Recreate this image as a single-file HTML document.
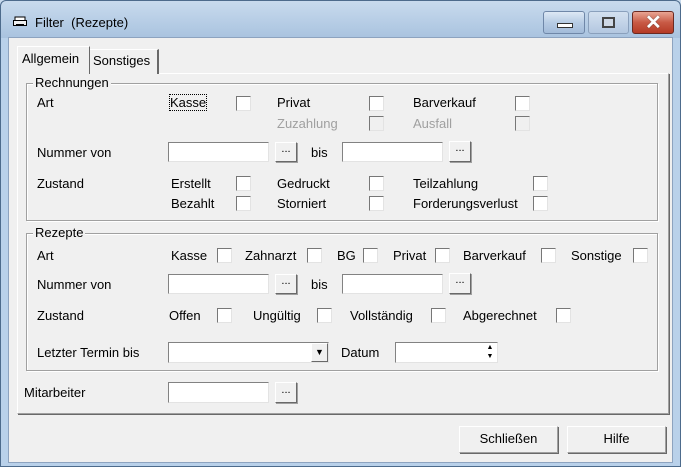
<!DOCTYPE html>
<html><head><meta charset="utf-8"><style>
*{margin:0;padding:0;box-sizing:border-box}
body{width:681px;height:467px;overflow:hidden;font-family:"Liberation Sans",sans-serif;font-size:13px;color:#000;position:relative;background:#b9d1ea}
.a{position:absolute}
.t{position:absolute;line-height:15px;white-space:nowrap}
.cb{position:absolute;width:15px;height:15px;background:#fff;border-top:1px solid #777;border-left:1px solid #777;border-right:1px solid #e3e3e3;border-bottom:1px solid #e3e3e3}
.cb.d{background:#f0f0f0}
.in{position:absolute;background:#fff;border-top:1px solid #828282;border-left:1px solid #828282;border-right:1px solid #e3e3e3;border-bottom:1px solid #e3e3e3}
.bt{position:absolute;background:#f0f0f0;border-top:1px solid #fff;border-left:1px solid #fff;border-right:1px solid #696969;border-bottom:1px solid #696969;box-shadow:1px 1px 0 #a0a0a0;text-align:center;font-size:11px;line-height:12px}
.grp{position:absolute;border:1px solid #a0a0a0;box-shadow:inset 1px 1px 0 #fff,1px 1px 0 #fff}
.gl{position:absolute;background:#f0f0f0;padding:0 2px;line-height:15px}
.g{color:#a0a0a0}
</style></head><body>
<div class="a" style="left:0;top:0;width:681px;height:38px;background:linear-gradient(#c9dbee,#a9c3df)"></div>
<div class="a" style="left:0;top:0;width:681px;height:467px;border:1px solid #4d6b8c;border-radius:6px 6px 0 0"></div>
<svg class="a" style="left:13px;top:16px" width="15" height="12"><rect x="2" y="1" width="10" height="4" fill="#fff" stroke="#000"/><rect x="0.5" y="4.5" width="13" height="5" fill="#eee" stroke="#000"/><rect x="3" y="8" width="8" height="2" fill="#000"/></svg>
<div class="t" style="left:35px;top:15px;font-size:13px">Filter&nbsp; (Rezepte)</div>
<div class="a" style="left:543px;top:11px;width:42px;height:23px;border:1px solid #6f87a8;border-radius:3px;background:linear-gradient(#dde8f5,#b7cce4 50%,#a2bbd9)"><div class="a" style="left:13px;top:11px;width:16px;height:5px;background:#fff;border:1px solid #333"></div></div>
<div class="a" style="left:588px;top:11px;width:41px;height:23px;border:1px solid #8aa0bc;border-radius:3px;background:linear-gradient(#d3e0ef,#b3c7e0)"><div class="a" style="left:13px;top:5px;width:13px;height:11px;border:2px solid #444;background:#cfd8e4"></div></div>
<div class="a" style="left:632px;top:11px;width:42px;height:23px;border:1px solid #6b2a22;border-radius:3px;background:linear-gradient(#e9a593,#c85a45 50%,#b53a25)"><div class="a" style="left:12px;top:0px;color:#fff;font-size:20px;font-weight:bold;line-height:22px;text-shadow:0 0 1px #333">✕</div></div>
<div class="a" style="left:8px;top:37px;width:665px;height:426px;background:#f0f0f0;border:1px solid #8da3bf"></div>
<!-- tabs -->
<div class="a" style="left:17px;top:73px;width:652px;height:341px;border:1px solid #fff;border-right-color:#a0a0a0;border-bottom-color:#a0a0a0;box-shadow:1px 1px 0 #696969"></div>
<div class="a" style="left:89px;top:49px;width:70px;height:25px;border:1px solid #fff;border-bottom:none;border-right:2px solid #696969;background:#f0f0f0"></div>
<div class="t" style="left:93px;top:53px">Sonstiges</div>
<div class="a" style="left:17px;top:46px;width:73px;height:28px;border:1px solid #fff;border-bottom:none;border-right:1px solid #696969;background:#f0f0f0"></div>
<div class="t" style="left:22px;top:51px">Allgemein</div>
<!-- Rechnungen -->
<div class="grp" style="left:26px;top:83px;width:632px;height:138px"></div>
<div class="gl" style="left:33px;top:75px">Rechnungen</div>
<div class="t" style="left:37px;top:95px">Art</div>
<div class="t" style="left:170px;top:95px;outline:1px dotted #000">Kasse</div><div class="cb" style="left:236px;top:96px"></div>
<div class="t" style="left:277px;top:95px">Privat</div><div class="cb" style="left:369px;top:96px"></div>
<div class="t" style="left:413px;top:95px">Barverkauf</div><div class="cb" style="left:515px;top:96px"></div>
<div class="t g" style="left:277px;top:116px">Zuzahlung</div><div class="cb d" style="left:369px;top:116px"></div>
<div class="t g" style="left:413px;top:116px">Ausfall</div><div class="cb d" style="left:515px;top:116px"></div>
<div class="t" style="left:37px;top:145px">Nummer von</div>
<div class="in" style="left:168px;top:142px;width:101px;height:20px"></div>
<div class="bt" style="left:275px;top:142px;width:22px;height:20px">...</div>
<div class="t" style="left:311px;top:145px">bis</div>
<div class="in" style="left:342px;top:142px;width:101px;height:20px"></div>
<div class="bt" style="left:449px;top:141px;width:22px;height:21px">...</div>
<div class="t" style="left:37px;top:176px">Zustand</div>
<div class="t" style="left:171px;top:176px">Erstellt</div><div class="cb" style="left:236px;top:176px"></div>
<div class="t" style="left:277px;top:176px">Gedruckt</div><div class="cb" style="left:369px;top:176px"></div>
<div class="t" style="left:413px;top:176px">Teilzahlung</div><div class="cb" style="left:533px;top:176px"></div>
<div class="t" style="left:171px;top:196px">Bezahlt</div><div class="cb" style="left:236px;top:196px"></div>
<div class="t" style="left:277px;top:196px">Storniert</div><div class="cb" style="left:369px;top:196px"></div>
<div class="t" style="left:413px;top:196px">Forderungsverlust</div><div class="cb" style="left:533px;top:196px"></div>
<!-- Rezepte -->
<div class="grp" style="left:26px;top:233px;width:632px;height:138px"></div>
<div class="gl" style="left:33px;top:225px">Rezepte</div>
<div class="t" style="left:37px;top:248px">Art</div>
<div class="t" style="left:171px;top:248px">Kasse</div><div class="cb" style="left:217px;top:248px"></div>
<div class="t" style="left:245px;top:248px">Zahnarzt</div><div class="cb" style="left:307px;top:248px"></div>
<div class="t" style="left:337px;top:248px">BG</div><div class="cb" style="left:363px;top:248px"></div>
<div class="t" style="left:393px;top:248px">Privat</div><div class="cb" style="left:435px;top:248px"></div>
<div class="t" style="left:463px;top:248px">Barverkauf</div><div class="cb" style="left:541px;top:248px"></div>
<div class="t" style="left:571px;top:248px">Sonstige</div><div class="cb" style="left:633px;top:248px"></div>
<div class="t" style="left:37px;top:277px">Nummer von</div>
<div class="in" style="left:168px;top:274px;width:101px;height:20px"></div>
<div class="bt" style="left:275px;top:274px;width:22px;height:20px">...</div>
<div class="t" style="left:311px;top:277px">bis</div>
<div class="in" style="left:342px;top:274px;width:101px;height:20px"></div>
<div class="bt" style="left:449px;top:273px;width:22px;height:21px">...</div>
<div class="t" style="left:37px;top:308px">Zustand</div>
<div class="t" style="left:169px;top:308px">Offen</div><div class="cb" style="left:217px;top:308px"></div>
<div class="t" style="left:253px;top:308px">Ungültig</div><div class="cb" style="left:317px;top:308px"></div>
<div class="t" style="left:350px;top:308px">Vollständig</div><div class="cb" style="left:431px;top:308px"></div>
<div class="t" style="left:463px;top:308px">Abgerechnet</div><div class="cb" style="left:556px;top:308px"></div>
<div class="t" style="left:37px;top:345px">Letzter Termin bis</div>
<div class="in" style="left:168px;top:342px;width:161px;height:21px"><div class="bt" style="right:0;top:0;width:17px;height:19px;font-size:9px;line-height:17px;box-shadow:none">▼</div></div>
<div class="t" style="left:341px;top:345px">Datum</div>
<div class="in" style="left:395px;top:342px;width:103px;height:21px"><div class="a" style="right:1px;top:0;width:12px;height:19px;font-size:7px;line-height:9px;text-align:center">▲<br>▼</div></div>
<div class="t" style="left:24px;top:385px">Mitarbeiter</div>
<div class="in" style="left:168px;top:382px;width:101px;height:21px"></div>
<div class="bt" style="left:275px;top:382px;width:22px;height:21px;line-height:14px">...</div>
<div class="bt" style="left:459px;top:426px;width:99px;height:27px;font-size:13px;line-height:24px;border-color:#fff #a0a0a0 #a0a0a0 #fff;box-shadow:1px 1px 0 #696969">Schließen</div>
<div class="bt" style="left:567px;top:426px;width:99px;height:27px;font-size:13px;line-height:24px;border-color:#fff #a0a0a0 #a0a0a0 #fff;box-shadow:1px 1px 0 #696969">Hilfe</div>
</body></html>
